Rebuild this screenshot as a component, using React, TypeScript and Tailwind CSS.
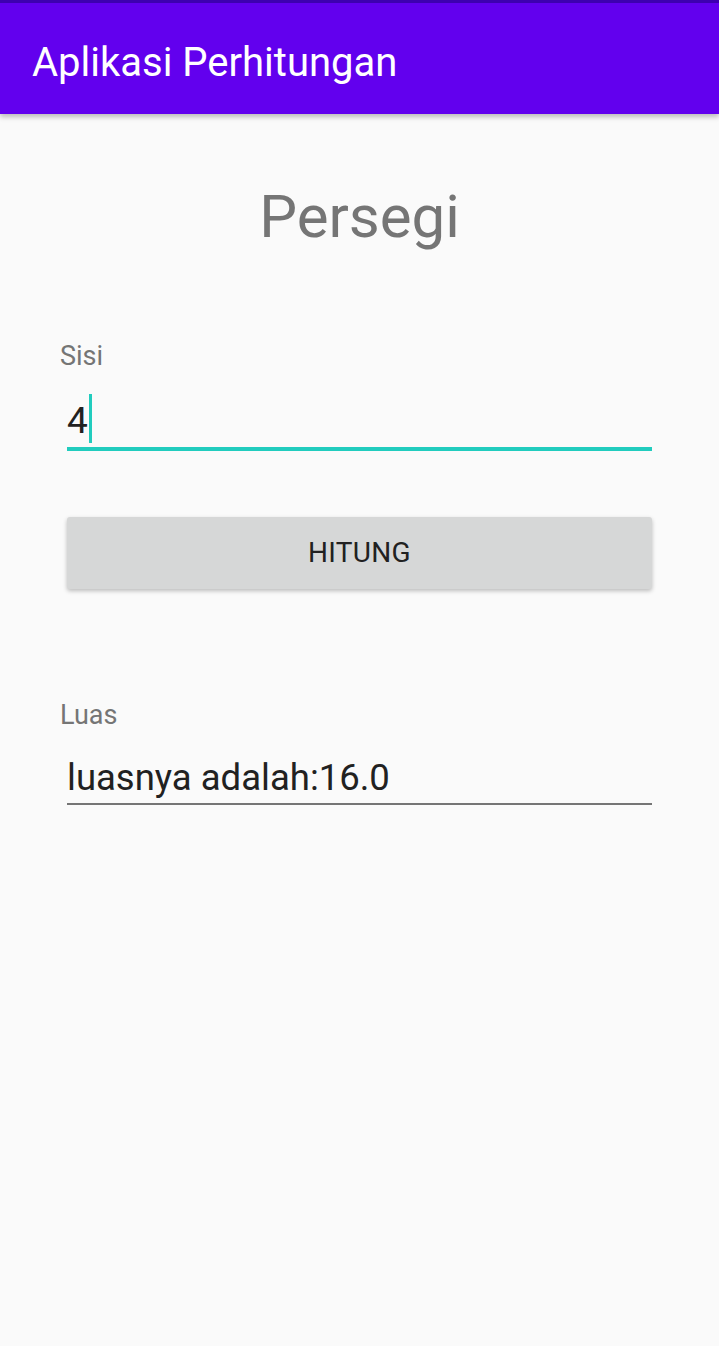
export default function App() {
  return (
    <div className="min-h-[1346px] w-full bg-[#FAFAFA] font-['Roboto',sans-serif]">
      {/* app bar */}
      <div className="relative z-10 h-[114px] bg-[#6200EE] border-t-[3px] border-[#3D00B0] shadow-[0_3px_5px_rgba(0,0,0,0.25)] pl-[32px] pt-[40px]">
        <div className="text-white text-[40px] leading-none">Aplikasi Perhitungan</div>
      </div>

      <div className="flex flex-col">
        <div className="text-center text-[#757575] text-[60px] leading-none pt-[73px]">Persegi</div>

        {/* sisi */}
        <div className="pl-[60px] pt-[96px] text-[#757575] text-[27px] leading-none">Sisi</div>
        <div className="mx-[67px] mt-[24px] border-b-[4px] border-[#21CCBE] h-[57px] flex items-start">
          <span className="text-[#212121] text-[37px] leading-none pt-[8px]">4</span>
          <span className="ml-[1px] w-[3px] h-[49px] bg-[#21CCBE]"></span>
        </div>

        {/* button */}
        <button className="mx-[67px] mt-[66px] h-[72px] rounded-[3px] bg-[#D6D7D7] shadow-[0_2px_4px_rgba(0,0,0,0.25)] text-[#212121] text-[28px] leading-none tracking-[0.3px]">
          HITUNG
        </button>

        {/* luas */}
        <div className="pl-[60px] pt-[113px] text-[#757575] text-[27px] leading-none">Luas</div>
        <div className="mx-[67px] mt-[31px] border-b-[2px] border-[#757575] h-[45px] text-[#212121] text-[36.5px] leading-none">
          luasnya adalah:16.0
        </div>
      </div>
    </div>
  );
}
